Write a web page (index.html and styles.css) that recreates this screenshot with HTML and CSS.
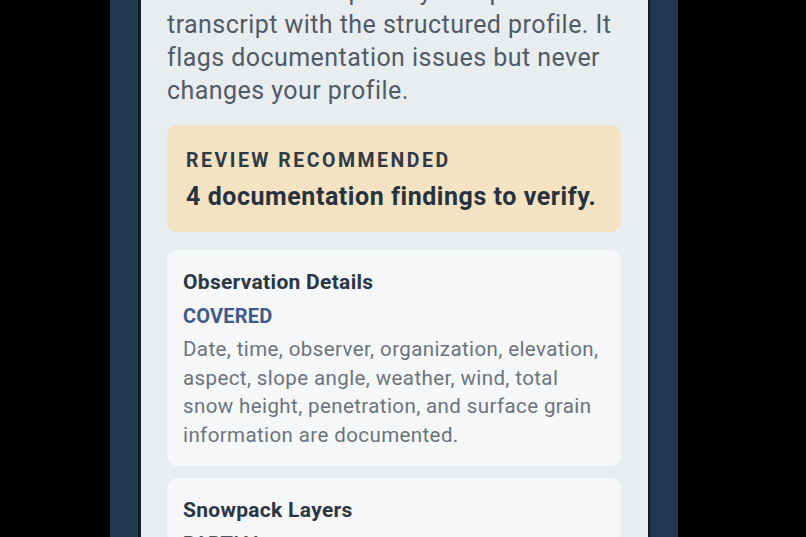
FILE: index.html
```html
<!DOCTYPE html>
<html lang="en">
<head>
	<meta charset="UTF-8">
	<title>Profile review</title>
	<link rel="stylesheet" href="styles.css">
</head>
<body>
	<div class="phone">
		<div class="screen">
			<p class="intro">The review compares your spoken summary<br>
				transcript with the structured profile. It<br>
				flags documentation issues but never<br>
				changes your profile.</p>

			<div class="alert">
				<div class="alert_label">REVIEW RECOMMENDED</div>
				<div class="alert_title">4 documentation findings to verify.</div>
			</div>

			<div class="card">
				<div class="card_title">Observation Details</div>
				<div class="status covered">COVERED</div>
				<p class="card_text">Date, time, observer, organization, elevation,<br>
					aspect, slope angle, weather, wind, total<br>
					snow height, penetration, and surface grain<br>
					information are documented.</p>
			</div>

			<div class="card">
				<div class="card_title">Snowpack Layers</div>
				<div class="status partial">PARTIAL</div>
				<p class="card_text">Layer thickness, hardness and grain type are
					recorded for most layers.</p>
			</div>
		</div>
	</div>
</body>
</html>
```

FILE: styles.css
```css
	html, body{
		margin: 0;
		height: 100%;
		background: #000;
		overflow: hidden;
	}
	.phone{
		width: 568px;
		height: 537px;
		margin-left: 110px;
		box-sizing: border-box;
		padding-left: 28px;
		padding-right: 28px;
		background: #21364f;
	}
	.screen{
		height: 100%;
		box-sizing: border-box;
		padding: 0 27px 0 26px;
		background: #e8edf0;
		border-left: 3px solid #101b27;
		border-right: 2px solid #101b27;
		font-family: Roboto, "Noto Sans", sans-serif;
		overflow: hidden;
	}
	.intro{
		margin: -25px 0 0;
		font-size: 25px;
		line-height: 33px;
		letter-spacing: 0.45px;
		white-space: nowrap;
		color: #505b67;
	}
	.alert{
		margin-top: 18px;
		padding: 23px 19px 20px;
		background: #f3e3c3;
		border-radius: 10px;
	}
	.alert_label{
		font-size: 19.5px;
		font-weight: bold;
		letter-spacing: 2.5px;
		line-height: 26px;
		color: #2f3a47;
	}
	.alert_title{
		margin-top: 8px;
		font-size: 25px;
		font-weight: bold;
		line-height: 30px;
		letter-spacing: 0.55px;
		color: #27323e;
	}
	.card{
		margin-top: 18px;
		padding: 18px 16px 16px;
		background: #f5f7f9;
		border-radius: 10px;
	}
	.card + .card{
		margin-top: 12px;
	}
	.card_title{
		font-size: 21px;
		font-weight: bold;
		line-height: 28px;
		letter-spacing: 0.3px;
		color: #2b3644;
	}
	.status{
		margin-top: 7px;
		font-size: 20px;
		font-weight: bold;
		line-height: 26px;
		letter-spacing: 0.2px;
	}
	.covered{
		color: #3f5b89;
	}
	.partial{
		color: #4f5560;
	}
	.card_text{
		margin: 6px 0 0;
		font-size: 20.5px;
		line-height: 28.7px;
		letter-spacing: 0.4px;
		white-space: nowrap;
		color: #6b747e;
	}
```
